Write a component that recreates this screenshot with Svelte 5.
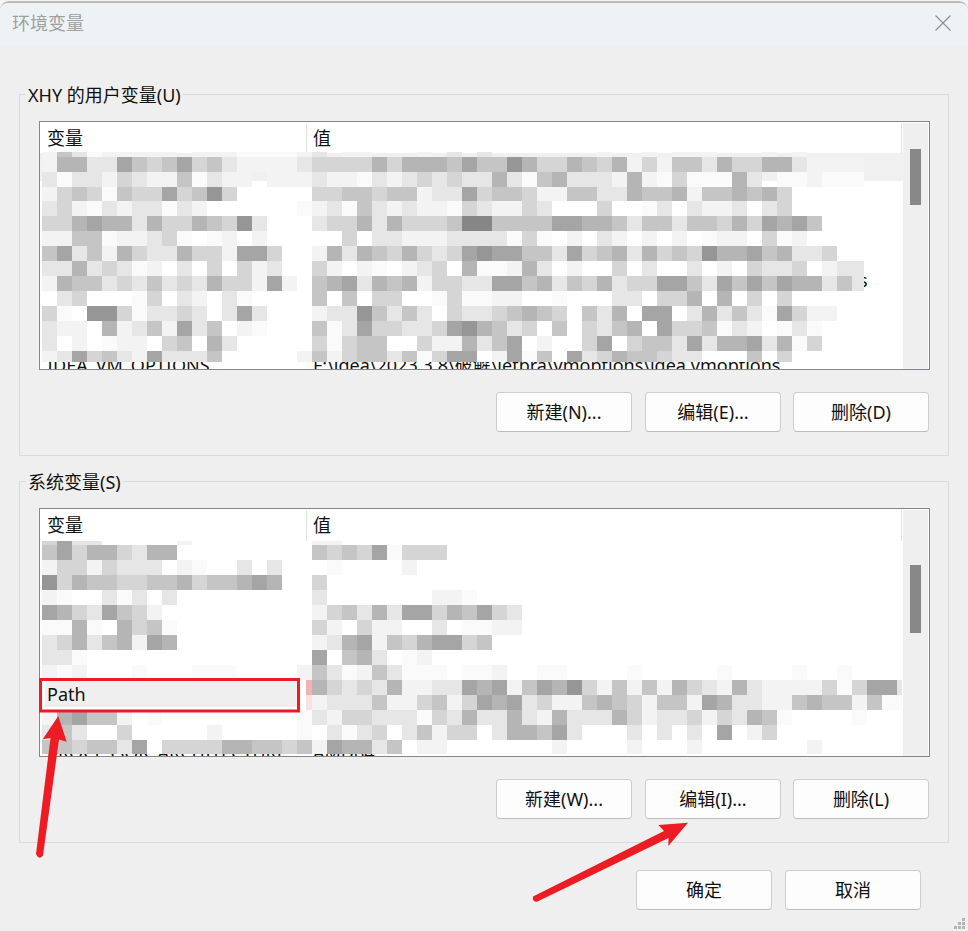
<script>
  const shade = { _: 255, f: 243, w: 250, e: 230, d: 213, c: 197, b: 181, a: 165, 9: 150, 8: 134 };
  const userMosaic = [
    [152, 5, 'fcewfffff.fffwwwwfe.ff...f.e.e.......f..f.fff...f.f'],
    [157, 15, 'fbbeeacdcadceffffeddddbdbbbcacc9bddbcdbfdfccebddbbeffff'],
    [172, 15, 'eweefdeffcweff.fffeffwefededeebewcbeeefbfwdwwwbe.wwfwww'],
    [187, 14, 'fdcdwcddadc9d.....ddccdccfeeadccdffcceebccbfccbcbd'],
    [201, 15, 'edfwefeewef......wfewcefeffwdeffde...d..we.effe.ed'],
    [216, 15, 'ddbabbebddbcd9e...eddbebdddc88ccccaabbcecceccdbdabac'],
    [231, 15, 'ffccwffedw.wf.f.....d.eefffeeeewdw.f.ef.f.f.wff.dwf'],
    [246, 15, 'caecfbdeebddfaad..fbebcdbdeda9aacceadcbebdcd9bbacbeed'],
    [261, 15, 'eebedewf.e.d.dfe..df.fw.fed.bwwfbe.f..d.e..e.f.deed.fee'],
    [276, 15, 'fbccedecedebddfaf.cbaebcbfddeeaacbecdbeddaaceacacabbece'],
    [291, 15, '.ed...wd.ef.ew....c.c.dd..wdwwff..w...ee.ddb.b.d.d'],
    [306, 15, 'dw.99dweede.eae...fee9cece.deedcbcd.ceb.aa.ebecewadff'],
    [321, 15, 'eff.bfecfaec.fw...cweaddeeda9bced.c.decb.addcwef.wew'],
    [336, 15, 'e.f.wff.dc.be.....dwdcc..dffbeca.f..da.dcceaebbaebwd'],
    [351, 11, 'feadcefaeeec_____fcfdccecwdaa_fawc_aedbccdee___c_d']
  ];
  const systemMosaic = [
    [541, 4, 'daee.....f........ff'],
    [545, 15, 'cadbbdebb.........cdcdawddd'],
    [560, 15, 'fddfdeee.fw..e.e...w....f'],
    [575, 15, '9dbccddccbdccbab..d'],
    [590, 15, 'fw..ewe.e.........e.......ffw'],
    [605, 15, 'abdeacdf..........fdcebeaadbcade'],
    [620, 15, 'wwbw.bdcw.........df.dff..e.wwff'],
    [635, 15, 'edbecbfab.........febafcdbaadc'],
    [650, 15, 'eew...............a.cbe.wf'],
    [665, 15, 'fwf...w...www....fcewfcewww.wwf..ww....w.....w....w..w'],
    [680, 15, '..................bdedebffeeabafcab9dfcfcfbdefbeffffdwdaaef'],
    [695, 15, '..................feeecffdcfdabaedffcbcdfccfabeeffcbccfcww'],
    [710, 15, 'fbaccf.w.........wefddeeewdebeebefbeeebdfeedfdebcw....w'],
    [725, 15, 'ece..d.....f.....w.ewed.ecfdd.ebbcae...e.e.e.a.fd'],
    [740, 14, 'ccdccea_ddddbbccdcfabbec.ff.......f....f...f.......f']
  ];

  function cells(rows, base, limit) {
    const out = [];
    for (const [y, h, line] of rows) {
      [...line].forEach((ch, k) => {
        if (ch === '.') return;
        const v = shade[ch];
        const x = 2 + k * 15;
        out.push({ x, y: y - base, w: Math.min(15, limit - x), h, fill: `rgb(${v},${v},${v})` });
      });
    }
    return out;
  }

  const userRows = [
    { sel: true }, {}, {}, {},
    { value: 's', tail: true }, {}, {},
    { name: 'IDEA_VM_OPTIONS', low: true, value: 'F:\\idea\\2023.3.8\\破解\\jetbra\\vmoptions\\idea.vmoptions' }
  ];
  const systemRows = [
    {}, {}, {}, {}, {},
    { name: 'Path', path: true }, {},
    { name: 'PROCESSOR_ARCHITECTURE', low: true, value: 'AMD64' }
  ];

  const groups = [
    {
      label: 'XHY 的用户变量(U)', rows: userRows, thumb: 'thumb-u',
      mosaic: cells(userMosaic, 122, 824), extras: [],
      buttons: ['新建(N)...', '编辑(E)...', '删除(D)']
    },
    {
      label: '系统变量(S)', rows: systemRows, thumb: 'thumb-s',
      mosaic: cells(systemMosaic, 509, 862),
      extras: [
        { x: 266, y: 171, w: 6, h: 15, fill: '#efb3b5' },
        { x: 266, y: 186, w: 6, h: 15, fill: '#f9e1e1' }
      ],
      buttons: ['新建(W)...', '编辑(I)...', '删除(L)']
    }
  ];
</script>

<div class="window">
  <header class="titlebar">
    <span class="title">环境变量</span>
    <svg class="close" width="16" height="16" viewBox="0 0 16 16" aria-label="关闭">
      <path d="M0.5 0.5 L15.5 15.5 M15.5 0.5 L0.5 15.5" />
    </svg>
  </header>

  <main class="content">
    {#each groups as group}
      <section class="group">
        <h2 class="legend">{group.label}</h2>
        <div class="table">
          <div class="list">
            <div class="head">
              <div class="hcell">变量</div>
              <div class="hcell">值</div>
            </div>
            {#each group.rows as row}
              <div class="row" class:sel={row.sel} class:low={row.low}>
                <div class="cell" class:path={row.path}>{row.name ?? ''}</div>
                <div class="cell" class:tail={row.tail}>{row.value ?? ''}</div>
              </div>
            {/each}
          </div>
          <div class="scroll"><div class="thumb {group.thumb}"></div></div>
          <svg class="mosaic" width="862" height="247" shape-rendering="crispEdges" aria-hidden="true">
            {#each group.mosaic as c}
              <rect x={c.x} y={c.y} width={c.w} height={c.h} fill={c.fill} />
            {/each}
            {#each group.extras as c}
              <rect x={c.x} y={c.y} width={c.w} height={c.h} fill={c.fill} />
            {/each}
          </svg>
        </div>
        <div class="actions">
          {#each group.buttons as label, i}
            <button class="btn" class:mid={i === 1}>{label}</button>
          {/each}
        </div>
      </section>
    {/each}
  </main>

  <footer class="footer">
    <button class="btn">确定</button>
    <button class="btn">取消</button>
  </footer>

  <svg class="annot" width="968" height="931" aria-hidden="true">
    <rect class="mark" x="188" y="0" width="1" height="2" />
    <rect class="mark" x="433" y="0" width="1" height="2" />
    <rect class="mark" x="685" y="0" width="1" height="2" />
    <rect class="box" x="40.5" y="679.5" width="258" height="31.5" />
    <path class="arrow" d="M36 854 L50.5 738 L42.7 739.3 L58.3 716 L66.7 741.7 L59 739.5 L43 855.5 Q39 860.5 36 854 Z" />
    <path class="arrow" d="M533 896.5 L664 831 L658.3 825 L688 822.7 L668.3 846 L668.5 838 L537.5 901.5 Q532 902.5 533 896.5 Z" />
    <g class="grip">
      <rect x="962" y="918" width="3" height="3" />
      <rect x="958" y="922" width="3" height="3" />
      <rect x="962" y="922" width="3" height="3" />
      <rect x="954" y="926" width="3" height="3" />
      <rect x="958" y="926" width="3" height="3" />
      <rect x="962" y="926" width="3" height="3" />
    </g>
  </svg>
</div>

<style>
  :global(body) {
    margin: 0;
    background: #f4f4f4;
  }

  .window {
    position: relative;
    box-sizing: border-box;
    width: 968px;
    height: 930px;
    margin-top: 1px;
    border-top: 2px solid #b9b9b9;
    border-radius: 9px 9px 0 0;
    background: #efefef;
    overflow: hidden;
    font-family: "Noto Sans", "Noto Sans CJK SC", sans-serif;
    font-size: 18px;
    line-height: 24px;
    color: #111;
  }

  .titlebar {
    box-sizing: border-box;
    display: flex;
    align-items: center;
    justify-content: space-between;
    height: 43px;
    padding: 0 17px 3px 12px;
    background: #eef2f5;
  }

  .title {
    color: #9f9f9f;
  }

  .close path {
    fill: none;
    stroke: #8d9296;
    stroke-width: 1.2;
  }

  .content {
    display: flex;
    flex-direction: column;
    gap: 25px;
    padding: 48px 19px 0;
  }

  .group {
    position: relative;
    box-sizing: border-box;
    width: 930px;
    height: 362px;
    padding: 26px 0 0 19px;
    border: 1px solid #dadada;
  }

  .legend {
    position: absolute;
    top: -12px;
    left: 6px;
    margin: 0;
    padding: 0 2px;
    background: #efefef;
    font: inherit;
  }

  .table {
    position: relative;
    display: flex;
    box-sizing: border-box;
    width: 891px;
    height: 249px;
    border: 1px solid #85868d;
    background: #fff;
    overflow: hidden;
  }

  .list {
    width: 863px;
    flex: none;
  }

  .head {
    display: grid;
    grid-template-columns: 267px 595px;
    height: 30px;
    margin-top: 1px;
  }

  .hcell {
    box-sizing: border-box;
    padding-left: 7px;
    line-height: 31px;
    border-right: 1px solid #e2e2e2;
  }

  .hcell + .hcell {
    padding-left: 6px;
  }

  .row {
    display: grid;
    grid-template-columns: 267px 595px;
    height: 28px;
    line-height: 30px;
  }

  .row.low {
    line-height: 32px;
  }

  .row.sel {
    background: #f0f0f0;
  }

  .cell {
    box-sizing: border-box;
    height: 28px;
    padding-left: 7px;
    white-space: nowrap;
    overflow: hidden;
  }

  .cell + .cell {
    padding-left: 6px;
  }

  .cell.tail {
    padding-left: 552px;
  }

  .cell.path {
    width: 252px;
    height: 27px;
    margin-left: 5px;
    padding-left: 2px;
    line-height: 28px;
    background: #efefef;
  }

  .scroll {
    flex: 1;
    display: flow-root;
    margin: 1px 1px 0 0;
    background: #efefef;
  }

  .thumb {
    width: 11px;
    margin-left: 7px;
    background: #888;
  }

  .thumb-u {
    height: 56px;
    margin-top: 26px;
  }

  .thumb-s {
    height: 68px;
    margin-top: 55px;
  }

  .mosaic {
    position: absolute;
    top: 0;
    left: 0;
  }

  .actions {
    display: flex;
    justify-content: flex-end;
    gap: 12px;
    margin: 22px 19px 0 0;
  }

  .btn {
    box-sizing: border-box;
    width: 136px;
    height: 40px;
    padding: 0;
    border: 1px solid #cdcdcd;
    border-bottom-color: #bcbcbc;
    border-radius: 4px;
    background: #fdfdfd;
    color: #111;
    font: inherit;
  }

  .btn.mid {
    margin-left: 1px;
  }

  .footer {
    display: flex;
    justify-content: flex-end;
    gap: 13px;
    padding: 27px 47px 0 0;
  }

  .annot {
    position: absolute;
    top: -3px;
    left: 0;
    pointer-events: none;
  }

  .mark {
    fill: #9a9a9a;
  }

  .box {
    fill: none;
    stroke: #ed1c24;
    stroke-width: 3;
  }

  .arrow {
    fill: #ed1c24;
  }

  .grip rect {
    fill: #b4b4b4;
  }
</style>
